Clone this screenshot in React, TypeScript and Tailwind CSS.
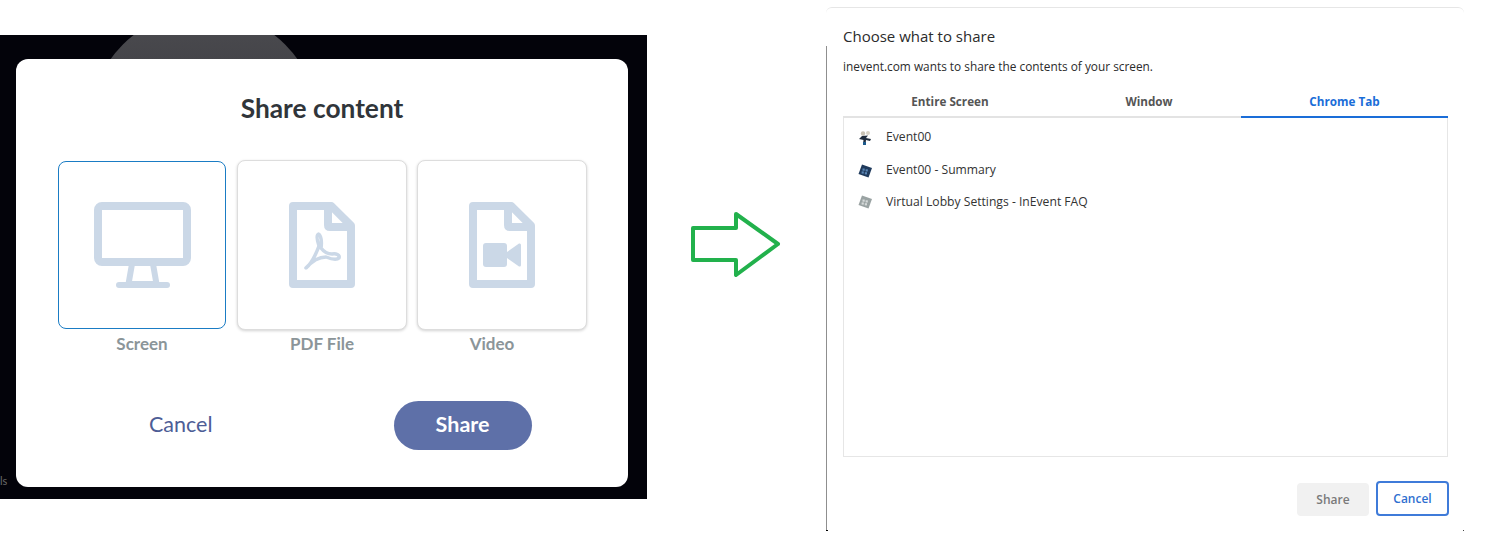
import React from 'react'

const ICON = '#cbd8e7'

function MonitorIcon() {
  return (
    <svg width="97" height="86" viewBox="0 0 97 86" fill="none">
      <rect x="4" y="4" width="89" height="56" rx="4" stroke={ICON} strokeWidth="8" />
      <path d="M38 62 L34.5 82 H62.5 L59 62" stroke={ICON} strokeWidth="6" />
      <path d="M25 83 H73" stroke={ICON} strokeWidth="6" strokeLinecap="round" />
    </svg>
  )
}

function FileShell({ children }: { children?: React.ReactNode }) {
  return (
    <svg width="66" height="86" viewBox="0 0 66 86" fill="none">
      <path d="M4 4 H42.3 L62 23.7 V82 H4 Z" stroke={ICON} strokeWidth="8" strokeLinejoin="round" />
      <path d="M39 4 V23 Q39 25 41 25 H62" stroke={ICON} strokeWidth="8" />
      {children}
    </svg>
  )
}

function PdfIcon() {
  return (
    <FileShell>
      <path
        d="M17 66 C22 62 27 52 30 44 C28 38 27 33 29.5 32 C32 33 33 40 32 46 C35 50 39 52 43 52 C47 51 51 53 50 56 C48 58 42 57 37 55 C30 55 24 58 17 66 Z"
        stroke={ICON}
        strokeWidth="3.5"
        strokeLinejoin="round"
      />
    </FileShell>
  )
}

function VideoIcon() {
  return (
    <FileShell>
      <rect x="14" y="41" width="24" height="24" rx="3" fill={ICON} />
      <path d="M38 50 L50 41.5 Q52 41 52 43 V63 Q52 65 50 64.5 L38 56 Z" fill={ICON} />
    </FileShell>
  )
}

function ShareOption({ label, active, labelClass, children }: { label: string; active?: boolean; labelClass?: string; children: React.ReactNode }) {
  return (
    <div className="flex flex-col items-center">
      <div
        className={`flex items-center justify-center rounded-lg bg-white ${
          active
            ? 'mt-px h-[168px] w-[168px] border border-[#1a7cc4]'
            : 'h-[170px] w-[170px] border border-[#dddddd] shadow-[0_1px_3px_rgba(0,0,0,0.18)]'
        }`}
      >
        {children}
      </div>
      <span className={`text-[17px] leading-5 font-bold text-[#8b9599] ${active ? 'mt-[5px]' : 'mt-1'} ${labelClass ?? ''}`}>{label}</span>
    </div>
  )
}

function TabIcon({ kind }: { kind: number }) {
  if (kind === 0) {
    return (
      <svg width="16" height="16" viewBox="0 0 16 16">
        <circle cx="6" cy="3.5" r="2.2" fill="#c9c2b4" />
        <circle cx="11" cy="3" r="2" fill="#d8d2c6" />
        <path d="M5 6 L11 5.5 L9 8 L14 9 L13 11 L9 10 L8.5 14 L6 14 L6.5 10 L2 9 Z" fill="#1f2c3d" />
        <path d="M6 12 H9 V15 H6 Z" fill="#1c5a8c" />
      </svg>
    )
  }
  const fill = kind === 1 ? '#1f3a5c' : '#9aa3a3'
  const inner = kind === 1 ? '#5b86b5' : '#d6dada'
  return (
    <svg width="16" height="16" viewBox="0 0 16 16">
      <path d="M5 1.5 L15 5 L11.5 14.5 L1.5 11 Z" fill={fill} />
      <rect x="5.5" y="5.5" width="2.2" height="2.2" fill={inner} />
      <rect x="8.6" y="6.3" width="2.2" height="2.2" fill={inner} />
      <rect x="4.6" y="8.4" width="2.2" height="2.2" fill={inner} />
      <rect x="7.8" y="9.2" width="2.2" height="2.2" fill={inner} />
    </svg>
  )
}

const tabs = [
  { label: 'Entire Screen', width: 'w-[214px]' },
  { label: 'Window', width: 'w-[184px]' },
  { label: 'Chrome Tab', width: 'w-[207px]', active: true },
]

const rows = [
  { label: 'Event00', height: 'h-[35px]' },
  { label: 'Event00 - Summary', height: 'h-[31px]' },
  { label: 'Virtual Lobby Settings - InEvent FAQ', height: 'h-[32px]' },
]

export default function App() {
  return (
    <div className="flex h-[549px] w-[1492px] items-start overflow-hidden bg-white">
      {/* Left: in-app share modal */}
      <div className="relative mt-[35px] h-[464px] w-[647px] shrink-0 overflow-hidden bg-[#03030a] pt-6 pl-4 font-['Lato',sans-serif]">
        <div className="absolute top-[-24px] left-[89px] h-[230px] w-[230px] rounded-full bg-gradient-to-b from-[#4c4c50] to-[#2c2c32]" />
        <span className="absolute bottom-[13px] left-0 text-[11px] leading-none text-[#6b6b6b]">ls</span>

        <div className="relative flex h-[428px] w-[612px] flex-col items-center rounded-xl bg-white">
          <h1 className="mt-[32px] text-[26.3px] leading-[34px] font-bold text-[#30353a]">Share content</h1>

          <div className="mt-[35px] flex w-full pl-[42px]">
            <ShareOption label="Screen" active>
              <MonitorIcon />
            </ShareOption>
            <div className="ml-[11px]">
              <ShareOption label="PDF File">
                <PdfIcon />
              </ShareOption>
            </div>
            <div className="ml-[10px]">
              <ShareOption label="Video" labelClass="pr-5">
                <VideoIcon />
              </ShareOption>
            </div>
          </div>

          <div className="mt-[47px] flex w-full items-center pl-[133px]">
            <button className="pb-1 text-[21.5px] leading-7 text-[#4d5d96]">Cancel</button>
            <button className="ml-[181px] h-[49px] w-[138px] rounded-full bg-[#5e70a8] pb-[2px] text-[21.5px] font-bold text-white">
              Share
            </button>
          </div>
        </div>
      </div>

      {/* Arrow */}
      <svg className="mt-[211px] ml-[44px] shrink-0" width="90" height="66" viewBox="0 0 90 66" fill="none">
        <path d="M2 17 H45 V3 L87 33 L45 64 V49 H2 Z" stroke="#22b14c" strokeWidth="4" strokeLinejoin="round" />
      </svg>

      {/* Right: Chrome picker */}
      <div className="relative mt-[7px] ml-[45px] flex h-[524px] w-[638px] shrink-0 flex-col rounded-tl-md rounded-tr-md border-t border-[#e6e6e6] px-[17px] font-['Open_Sans',sans-serif]">
        <div className="absolute top-[38px] bottom-0 left-0 w-px bg-[#8f8f8f]" />
        <div className="absolute bottom-0 left-0 h-px w-[2px] bg-black" />
        <div className="absolute right-0 bottom-0 h-px w-px bg-[#444444]" />
        <h2 className="mt-[18px] text-[15px] leading-5 text-[#2b2b2b]">Choose what to share</h2>
        <p className="mt-[11px] text-[11.85px] leading-[18px] text-[#2b2b2b]">inevent.com wants to share the contents of your screen.</p>

        <div className="mt-[17px] flex w-[605px]">
          {tabs.map((tab) => (
            <div
              key={tab.label}
              className={`flex h-[26px] items-start justify-center border-b-2 text-[11.7px] leading-[18px] font-bold ${tab.width} ${
                tab.active ? 'border-[#1a6dd8] text-[#1a6dd8]' : 'border-[#e3e3e3] text-[#555555]'
              }`}
            >
              {tab.label}
            </div>
          ))}
        </div>

        <div className="h-[339px] w-[605px] border border-t-0 border-[#e6e6e6] pt-[2px]">
          {rows.map((row, i) => (
            <div key={row.label} className={`flex items-center pl-[13px] ${row.height}`}>
              <TabIcon kind={i} />
              <span className="ml-[13px] text-[12.15px] text-[#333333]">{row.label}</span>
            </div>
          ))}
        </div>

        <div className="mt-6 flex w-[606px] items-center justify-end gap-[7px]">
          <button className="mt-[2px] h-[33px] w-[72px] rounded bg-[#f1f1f1] text-[12px] font-semibold text-[#7a7a7a]">Share</button>
          <button className="h-[35px] w-[73px] rounded border-2 border-[#3f7bd9] bg-white text-[12px] font-semibold text-[#2f6fd0]">Cancel</button>
        </div>
      </div>
    </div>
  )
}
